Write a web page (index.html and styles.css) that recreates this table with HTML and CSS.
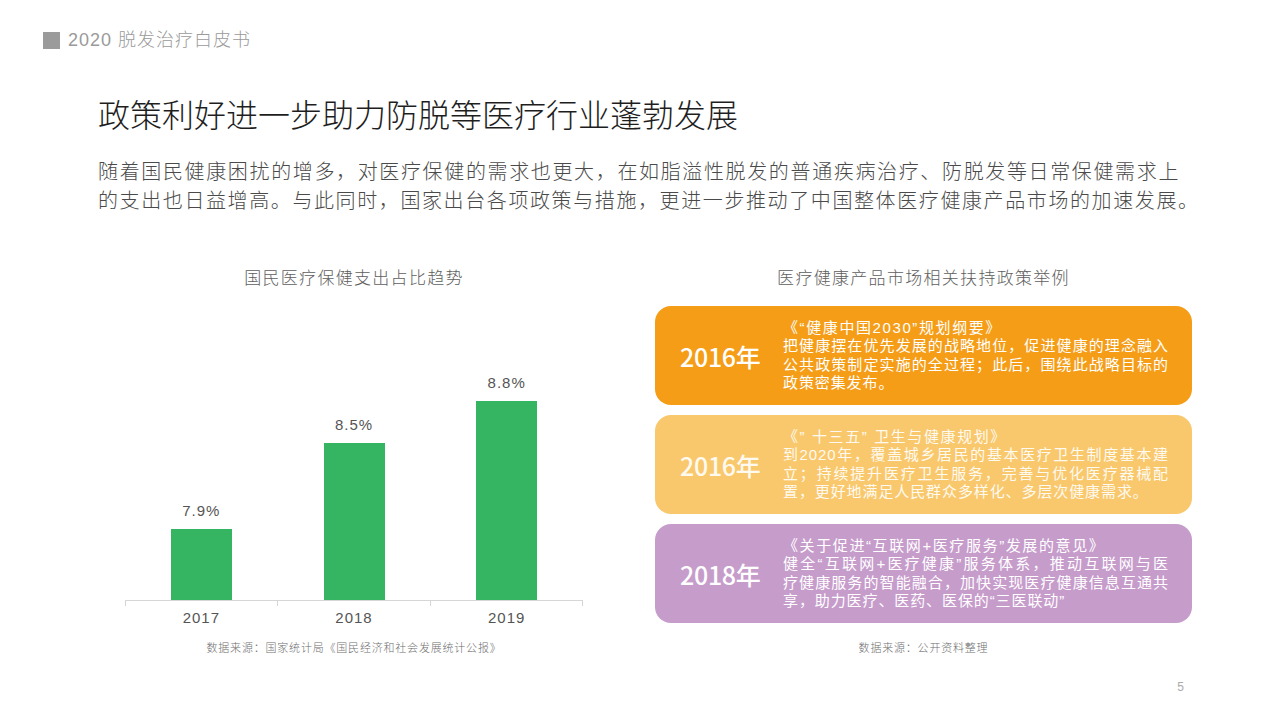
FILE: index.html
```html
<!DOCTYPE html>
<html lang="zh-CN">
<head>
<meta charset="utf-8">
<title>2020 脱发治疗白皮书</title>
<link rel="stylesheet" href="styles.css">
</head>
<body>
<div class="page">
  <header class="header">
    <span class="hsq"></span>
    <span class="htext">2020 脱发治疗白皮书</span>
  </header>

  <h1 class="title">政策利好进一步助力防脱等医疗行业蓬勃发展</h1>

  <p class="lead">
    <span class="lead-line j">随着国民健康困扰的增多，对医疗保健的需求也更大，在如脂溢性脱发的普通疾病治疗、防脱发等日常保健需求上</span>
    <span class="lead-line nw">的支出也日益增高。与此同时，国家出台各项政策与措施，更进一步推动了中国整体医疗健康产品市场的加速发展。</span>
  </p>

  <div class="panels">
    <section class="panel chart-panel">
      <h2 class="ptitle">国民医疗保健支出占比趋势</h2>
      <div class="plot">
        <div class="slot">
          <span class="val">7.9%</span>
          <div class="bar" style="height:71px"></div>
        </div>
        <div class="slot">
          <span class="val">8.5%</span>
          <div class="bar" style="height:157px"></div>
        </div>
        <div class="slot">
          <span class="val">8.8%</span>
          <div class="bar" style="height:199px"></div>
        </div>
      </div>
      <div class="ticks">
        <span class="tick"></span><span class="tick"></span><span class="tick last"></span>
      </div>
      <div class="xlabels">
        <span>2017</span><span>2018</span><span>2019</span>
      </div>
      <p class="source">数据来源：国家统计局《国民经济和社会发展统计公报》</p>
    </section>

    <section class="panel policy-panel">
      <h2 class="ptitle">医疗健康产品市场相关扶持政策举例</h2>
      <div class="cards">
        <div class="card c1">
          <div class="year">2016年</div>
          <div class="desc">
            <div class="ln t">《“健康中国2030”规划纲要》</div>
            <div class="ln j">把健康摆在优先发展的战略地位，促进健康的理念融入</div>
            <div class="ln j">公共政策制定实施的全过程；此后，围绕此战略目标的</div>
            <div class="ln">政策密集发布。</div>
          </div>
        </div>
        <div class="card c2">
          <div class="year">2016年</div>
          <div class="desc">
            <div class="ln t">《” 十三五” 卫生与健康规划》</div>
            <div class="ln j">到2020年，覆盖城乡居民的基本医疗卫生制度基本建</div>
            <div class="ln j">立；持续提升医疗卫生服务，完善与优化医疗器械配</div>
            <div class="ln">置，更好地满足人民群众多样化、多层次健康需求。</div>
          </div>
        </div>
        <div class="card c3">
          <div class="year">2018年</div>
          <div class="desc">
            <div class="ln t">《关于促进“互联网+医疗服务”发展的意见》</div>
            <div class="ln j">健全“互联网+医疗健康”服务体系，推动互联网与医</div>
            <div class="ln j">疗健康服务的智能融合，加快实现医疗健康信息互通共</div>
            <div class="ln">享，助力医疗、医药、医保的“三医联动”</div>
          </div>
        </div>
      </div>
      <p class="source">数据来源：公开资料整理</p>
    </section>
  </div>

  <footer class="footer">5</footer>
</div>
</body>
</html>
```

FILE: styles.css
```css
* { box-sizing: border-box; }

html, body {
  margin: 0;
  padding: 0;
  background: #ffffff;
}

body {
  font-family: "Noto Sans CJK SC", "Noto Sans", sans-serif;
  color: #333;
}

.page {
  width: 1280px;
  height: 720px;
  overflow: hidden;
  background: #ffffff;
}

/* header */
.header {
  display: flex;
  align-items: center;
  gap: 8px;
  padding: 31px 0 0 43px;
  height: 50px;
}

.hsq {
  width: 17px;
  height: 17px;
  background: #9b9b9b;
  flex: none;
}

.htext {
  font-family: "Liberation Sans", "Noto Sans CJK SC", sans-serif;
  font-size: 18px;
  line-height: 19px;
  color: #9a9a9a;
  letter-spacing: 1px;
  font-weight: 300;
}

/* title */
.title {
  margin: 43px 0 0 98px;
  font-size: 32px;
  line-height: 40px;
  font-weight: 300;
  color: #1e1e1e;
  white-space: nowrap;
}

/* lead paragraph */
.lead {
  margin: 23px 0 0 98px;
  font-size: 20px;
  line-height: 29px;
  letter-spacing: 1.6px;
  font-weight: 300;
  color: #4a4a4a;
}

.lead-line {
  display: block;
}

.lead-line.j {
  width: 1082px;
  text-align: justify;
  text-align-last: justify;
}

.lead-line.nw {
  white-space: nowrap;
}

/* panels */
.panels {
  display: flex;
  margin-top: 51px;
  padding-left: 125px;
  gap: 72px;
}

.panel {
  display: flex;
  flex-direction: column;
}

.chart-panel { width: 458px; }
.policy-panel { width: 537px; }

.ptitle {
  margin: 0;
  font-size: 17px;
  line-height: 24px;
  font-weight: 300;
  letter-spacing: 1.3px;
  color: #5e5e5e;
  text-align: center;
}

/* chart */
.plot {
  display: flex;
  align-items: flex-end;
  height: 312px;
  border-bottom: 1px solid #d6d6d6;
}

.slot {
  flex: 1;
  display: flex;
  flex-direction: column;
  align-items: center;
}

.val {
  font-family: "Liberation Sans", sans-serif;
  font-size: 15px;
  line-height: 20px;
  letter-spacing: 1px;
  color: #555;
  margin-bottom: 8px;
}

.bar {
  width: 61px;
  background: #35b562;
}

.ticks {
  display: flex;
  height: 5px;
}

.tick {
  flex: 1;
  border-left: 1px solid #d6d6d6;
}

.tick.last {
  border-right: 1px solid #d6d6d6;
}

.xlabels {
  display: flex;
  margin-top: 2px;
}

.xlabels span {
  flex: 1;
  text-align: center;
  font-family: "Liberation Sans", sans-serif;
  font-size: 15px;
  line-height: 20px;
  letter-spacing: 1px;
  color: #555;
}

.source {
  margin: 11px 0 0;
  font-size: 11px;
  line-height: 16px;
  letter-spacing: 0.8px;
  font-weight: 300;
  color: #6e6e6e;
  text-align: center;
}

.policy-panel .source {
  margin-top: 16px;
}

/* policy cards */
.cards {
  display: flex;
  flex-direction: column;
  gap: 10px;
  margin-top: 17px;
}

.card {
  height: 99px;
  border-radius: 16px;
  display: flex;
  align-items: center;
  padding-left: 25px;
  color: #fff;
}

.c1 { background: #f59d17; }
.c2 { background: #f9c86c; }
.c3 { background: #c69ccb; }

.c2 .desc, .c2 .year { color: #fffaf0; }

.year {
  width: 103px;
  flex: none;
  font-size: 25px;
  line-height: 30px;
  font-weight: 500;
  letter-spacing: -0.3px;
}

.desc {
  width: 386px;
  font-family: "Liberation Sans", "Noto Sans CJK SC", sans-serif;
  font-size: 15px;
  line-height: 18.5px;
  letter-spacing: 0.9px;
}

.ln {
  white-space: normal;
}

.ln.t {
  letter-spacing: 1.6px;
}

.ln.j {
  text-align: justify;
  text-align-last: justify;
}

/* footer */
.footer {
  margin-top: 24px;
  padding-right: 96px;
  text-align: right;
  font-family: "Liberation Sans", sans-serif;
  font-size: 12px;
  line-height: 16px;
  color: #aaa;
}
```
